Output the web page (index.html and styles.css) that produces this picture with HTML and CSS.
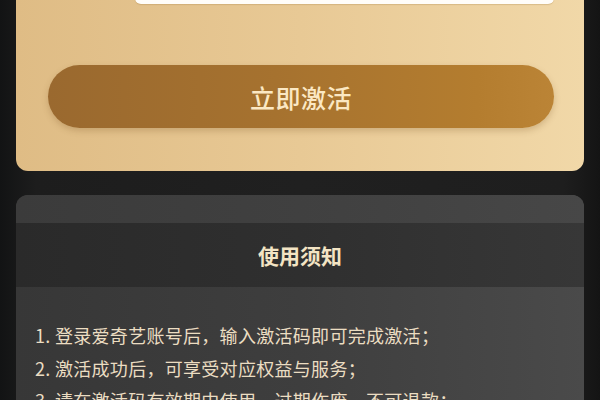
FILE: index.html
```html
<!DOCTYPE html>
<html lang="zh-CN">
<head>
<meta charset="utf-8">
<title>激活</title>
<link rel="stylesheet" href="styles.css">
</head>
<body>
<div class="page">
  <section class="gold-card">
    <div class="code-row">
      <div class="code-spacer"></div>
      <div class="code-input"></div>
    </div>
    <button class="activate-btn">立即激活</button>
  </section>
  <section class="notice-card">
    <div class="notice-strip"></div>
    <h2 class="notice-title">使用须知</h2>
    <ol class="notice-list">
      <li>1. 登录爱奇艺账号后，输入激活码即可完成激活；</li>
      <li>2. 激活成功后，可享受对应权益与服务；</li>
      <li>3. 请在激活码有效期中使用，过期作废，不可退款；</li>
    </ol>
  </section>
</div>
</body>
</html>
```
FILE: styles.css
```css
html, body {
  margin: 0;
  padding: 0;
}
body {
  width: 600px;
  height: 400px;
  overflow: hidden;
  background: linear-gradient(90deg, #121314 0%, #1d1d1d 6%, #202020 50%, #1e1e1e 94%, #141414 100%);
  font-family: "Noto Sans CJK SC", "Noto Sans", sans-serif;
}
.page {
  display: flex;
  flex-direction: column;
  gap: 24px;
  padding: 0 16px 0 16px;
}
.gold-card {
  margin-top: -40px;
  background: linear-gradient(90deg, #dfbc85 0%, #e8c995 50%, #f1d8a8 100%);
  border-radius: 0 0 12px 12px;
  padding: 0 30px 43px 32px;
  display: flex;
  flex-direction: column;
}
.code-row {
  display: flex;
  align-items: center;
  height: 44px;
}
.code-spacer {
  width: 87px;
  flex: none;
}
.code-input {
  flex: 1;
  height: 44px;
  background: #fffdf9;
  border-radius: 6px;
  box-shadow: 0 1px 1px rgba(150, 110, 50, 0.25);
}
.activate-btn {
  margin-top: 61px;
  height: 63px;
  border: none;
  border-radius: 32px;
  background: linear-gradient(90deg, #9a692f 0%, #a6722f 45%, #b47d2f 85%, #bb8436 100%);
  box-shadow: 0 3px 6px rgba(120, 80, 30, 0.25);
  color: #fbe8c4;
  font-family: "Noto Sans CJK SC", sans-serif;
  font-size: 25px;
  font-weight: 500;
  letter-spacing: 0.5px;
  padding: 0;
}
.notice-card {
  border-radius: 12px 12px 0 0;
  overflow: hidden;
  background: linear-gradient(90deg, #373737 0%, #3e3e3e 50%, #4a4a4a 100%);
  padding-bottom: 40px;
}
.notice-strip {
  height: 28px;
  background: linear-gradient(90deg, #3b3b3b 0%, #404040 50%, #474747 100%);
}
.notice-title {
  margin: 0;
  height: 64px;
  display: flex;
  align-items: center;
  justify-content: center;
  background: linear-gradient(90deg, #2a2a2a 0%, #2f2f2f 50%, #373737 100%);
  color: #f3e4c4;
  font-size: 21px;
  font-weight: 700;
}
.notice-list {
  list-style: none;
  margin: 0;
  padding: 32px 19px 0 19px;
  color: #ebddc2;
  font-size: 18px;
  letter-spacing: 0.3px;
  line-height: 32.5px;
}
.notice-list li {
  white-space: nowrap;
}
```
